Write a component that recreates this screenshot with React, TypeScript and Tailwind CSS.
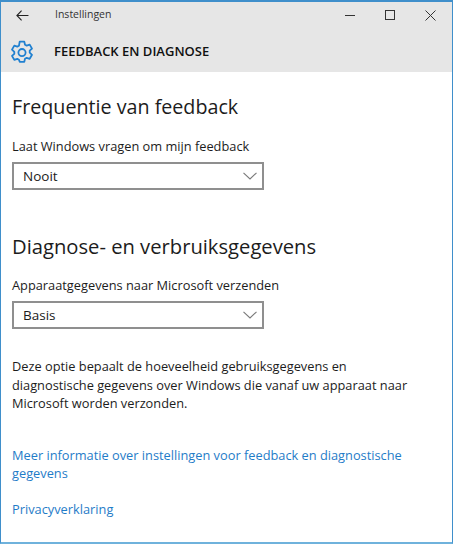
import React from 'react';

function Chevron() {
  return (
    <svg width="14" height="8" viewBox="0 0 14 8" fill="none" stroke="#7a7a7a" strokeWidth="1.1">
      <path d="M0.5 0.8 L7 7 L13.5 0.8" />
    </svg>
  );
}

function Gear() {
  return (
    <svg width="24" height="24" viewBox="0 0 24 24" fill="none" stroke="#2080d0" strokeWidth="1.8" strokeLinejoin="round">
      <path d="M9.7 1.6h4.6l.7 3.1 1.7.9 3-1 2.3 4-2.3 2.1v2l2.3 2.1-2.3 4-3-1-1.7.9-.7 3.1H9.7L9 19.8l-1.7-.9-3 1-2.3-4 2.3-2.1v-2L2 9.6l2.3-4 3 1L9 5.7z" />
      <circle cx="12" cy="12.6" r="3.6" />
    </svg>
  );
}

function Select({ value }: { value: string }) {
  return (
    <div className="flex h-[28px] w-[252px] items-center justify-between border-2 border-[#8f8f8f] bg-white pl-[9px] pr-[5px] text-[13.5px] text-[#1c1c1c]">
      <span>{value}</span>
      <Chevron />
    </div>
  );
}

export default function App() {
  return (
    <div className="flex h-[544px] w-[453px] flex-col border-x border-t-2 border-b-2 border-x-[#3f8fcb] border-t-[#3f8fcb] border-b-[#6fb2dc] bg-white font-['Open_Sans','Noto_Sans',sans-serif]">
      <header className="flex h-[70px] flex-col bg-[#e6e6e6]">
        <div className="flex h-[26px] items-center">
          <svg className="ml-[15px]" width="13" height="11" viewBox="0 0 14 12" fill="none" stroke="#222" strokeWidth="1.2">
            <path d="M13.5 6H1M6 0.8 L0.9 6 L6 11.2" />
          </svg>
          <span className="ml-[26px] text-[10.5px] text-[#333]">Instellingen</span>
          <div className="ml-auto flex items-center">
            <span className="h-[1px] w-[10px] bg-[#333]" />
            <span className="ml-[30px] h-[10px] w-[10px] border border-[#333]" />
            <svg className="ml-[30px] mr-[16px]" width="11" height="11" viewBox="0 0 11 11" stroke="#333" strokeWidth="1">
              <path d="M0.5 0.5 L10.5 10.5 M10.5 0.5 L0.5 10.5" />
            </svg>
          </div>
        </div>
        <div className="flex h-[44px] items-center">
          <div className="ml-[9px] mt-[3px]"><Gear /></div>
          <h1 className="ml-[20px] mt-[3px] text-[13px] font-semibold text-[#111]">FEEDBACK EN DIAGNOSE</h1>
        </div>
      </header>
      <main className="flex flex-col pl-[11px] pr-[10px]">
        <h2 className="mt-[21px] text-[19.7px] leading-[28px] text-[#1c1c1c]">Frequentie van feedback</h2>
        <p className="mt-[16px] text-[12.8px] leading-[18px] text-[#1c1c1c]">Laat Windows vragen om mijn feedback</p>
        <div className="mt-[7px]"><Select value="Nooit" /></div>
        <h2 className="mt-[42px] text-[20.2px] leading-[28px] text-[#1c1c1c]">Diagnose- en verbruiksgegevens</h2>
        <p className="mt-[16px] text-[12.8px] leading-[18px] text-[#1c1c1c]">Apparaatgegevens naar Microsoft verzenden</p>
        <div className="mt-[7px]"><Select value="Basis" /></div>
        <p className="mt-[28px] text-[12.8px] leading-[18.5px] text-[#1c1c1c]">
          Deze optie bepaalt de hoeveelheid gebruiksgegevens en<br />
          diagnostische gegevens over Windows die vanaf uw apparaat naar<br />
          Microsoft worden verzonden.
        </p>
        <p className="mt-[33px] text-[12.8px] leading-[18.5px] text-[#1f7cc8]">
          Meer informatie over instellingen voor feedback en diagnostische<br />gegevens
        </p>
        <p className="mt-[17px] text-[12.8px] leading-[19px] text-[#1f7cc8]">Privacyverklaring</p>
      </main>
    </div>
  );
}
